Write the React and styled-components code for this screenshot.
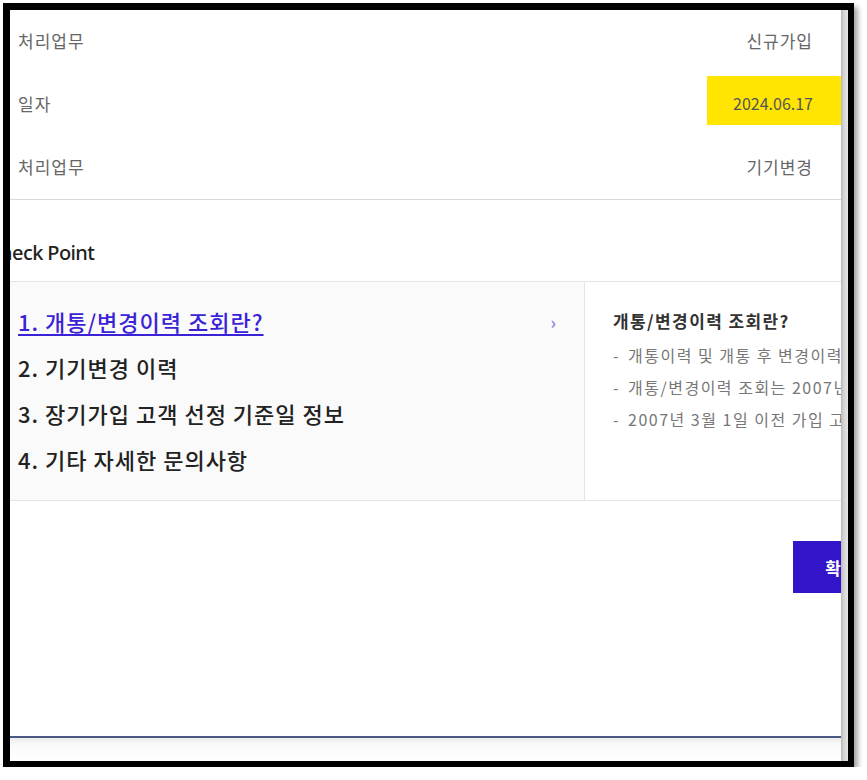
import React from "react";
import styled, { createGlobalStyle } from "styled-components";

const GlobalStyle = createGlobalStyle`
  body {
    margin: 0;
    background: #fff;
    font-family: "Noto Sans CJK KR", "Noto Sans", sans-serif;
  }
`;

const info = [
  { label: "처리업무", value: "신규가입" },
  { label: "일자", value: "2024.06.17", highlight: true },
  { label: "처리업무", value: "기기변경" },
];

const points = [
  "1. 개통/변경이력 조회란?",
  "2. 기기변경 이력",
  "3. 장기가입 고객 선정 기준일 정보",
  "4. 기타 자세한 문의사항",
];

const details = [
  "개통이력 및 개통 후 변경이력을 조회하실 수 있습니다.",
  "개통/변경이력 조회는 2007년 3월 1일 이후 내역부터 가능합니다.",
  "2007년 3월 1일 이전 가입 고객은 고객센터로 문의해 주세요.",
];

function App() {
  return (
    <>
      <GlobalStyle />
      <StFrame>
        <StViewport>
          <StPage>
            <StInfoList>
              {info.map((row, i) => (
                <StInfoRow key={i}>
                  <StLabel>{row.label}</StLabel>
                  <StValue $highlight={row.highlight}>{row.value}</StValue>
                </StInfoRow>
              ))}
            </StInfoList>

            <StHeading>Check Point</StHeading>

            <StPointBox>
              <StPointList>
                {points.map((p, i) => (
                  <StPointItem key={i}>
                    <StPointText $active={i === 0}>{p}</StPointText>
                    {i === 0 && <StChevron>›</StChevron>}
                  </StPointItem>
                ))}
              </StPointList>
              <StDetail>
                <StDetailTitle>개통/변경이력 조회란?</StDetailTitle>
                <StDetailList>
                  {details.map((d, i) => (
                    <li key={i}>
                      <StDash>-</StDash>
                      {d}
                    </li>
                  ))}
                </StDetailList>
              </StDetail>
            </StPointBox>

            <StFooter>
              <StConfirm>확인</StConfirm>
            </StFooter>

            <StBottomBar />
          </StPage>
        </StViewport>
        <StScrollStrip />
      </StFrame>
    </>
  );
}

export default App;

const StFrame = styled.div`
  box-sizing: border-box;
  margin: 3px 0 0 3px;
  width: 851px;
  height: 764px;
  border-style: solid;
  border-color: #000;
  border-width: 7px 6px 6px 7px;
  box-shadow: 4px 4px 5px rgba(0, 0, 0, 0.35);
  display: flex;
  background: #fff;
`;

const StViewport = styled.div`
  flex: 1;
  overflow: hidden;
  display: flex;
`;

const StScrollStrip = styled.div`
  width: 7px;
  background: linear-gradient(to right, #b8b8b8, #d4d4d4 40%, #e6e6e6);
`;

const StPage = styled.div`
  flex: none;
  width: 940px;
  margin-left: -20px;
  display: flex;
  flex-direction: column;
`;

const StInfoList = styled.div`
  width: 851px;
  border-bottom: 1px solid #d9d9d9;
`;

const StInfoRow = styled.div`
  height: 63px;
  display: flex;
  align-items: center;
  justify-content: space-between;
  padding-left: 28px;
  font-size: 17px;
  letter-spacing: 1px;
  color: #666;
`;

const StLabel = styled.span`
  color: #666;
  margin-top: -3px;
`;

const StValue = styled.span`
  box-sizing: border-box;
  padding: 0 28px 0 26px;
  margin-top: -3px;
  color: #666;
  ${(p) =>
    p.$highlight &&
    `
    background: #ffe500;
    color: #555;
    font-size: 16px;
    letter-spacing: 0;
    height: 49px;
    line-height: 43px;
    padding-top: 6px;
    margin-top: 0;
    margin-bottom: 8px;
  `}
`;

const StHeading = styled.h2`
  margin: 39px 0 14px -2px;
  font-family: "Noto Sans", "Noto Sans CJK KR", sans-serif;
  font-size: 20px;
  line-height: 28px;
  font-weight: 500;
  color: #222;
  letter-spacing: -0.6px;
`;

const StPointBox = styled.div`
  display: flex;
  border-top: 1px solid #e4e4e4;
  border-bottom: 1px solid #e4e4e4;
`;

const StPointList = styled.ul`
  flex: none;
  list-style: none;
  margin: 0;
  width: 595px;
  box-sizing: border-box;
  padding: 16px 26px 18px 28px;
  background: #fafafa;
  border-right: 1px solid #e4e4e4;
`;

const StPointItem = styled.li`
  height: 46px;
  display: flex;
  align-items: center;
  justify-content: space-between;
`;

const StPointText = styled.span`
  font-size: 22px;
  font-weight: 500;
  letter-spacing: 1px;
  color: ${(p) => (p.$active ? "#3a22d6" : "#222")};
  text-decoration: ${(p) => (p.$active ? "underline" : "none")};
  text-underline-offset: 3px;
  text-decoration-thickness: 1.5px;
`;

const StChevron = styled.span`
  font-size: 17px;
  color: #9584e6;
  font-weight: 700;
  margin-right: 2px;
`;

const StDetail = styled.div`
  flex: 1;
  min-width: 0;
  overflow: hidden;
  padding: 27px 0 0 28px;
  white-space: nowrap;
`;

const StDetailTitle = styled.div`
  font-size: 17px;
  line-height: 24px;
  font-weight: 700;
  letter-spacing: 1.4px;
  color: #333;
`;

const StDetailList = styled.ul`
  list-style: none;
  margin: 6px 0 0;
  padding: 0;
  font-size: 16px;
  line-height: 32px;
  color: #777;
  letter-spacing: 1.5px;
`;

const StDash = styled.span`
  display: inline-block;
  width: 15px;
`;

const StFooter = styled.div`
  display: flex;
  justify-content: flex-end;
  margin-top: 40px;
  padding-right: 41px;
`;

const StConfirm = styled.button`
  width: 96px;
  height: 52px;
  border: none;
  background: #3414c9;
  color: #fff;
  font-family: "Noto Sans CJK KR", sans-serif;
  font-size: 17px;
  font-weight: 700;
`;

const StBottomBar = styled.div`
  margin-top: auto;
  height: 23px;
  border-top: 2px solid #4a5a80;
  background: linear-gradient(#ebebeb, #fafafa 30%, #fff);
`;
